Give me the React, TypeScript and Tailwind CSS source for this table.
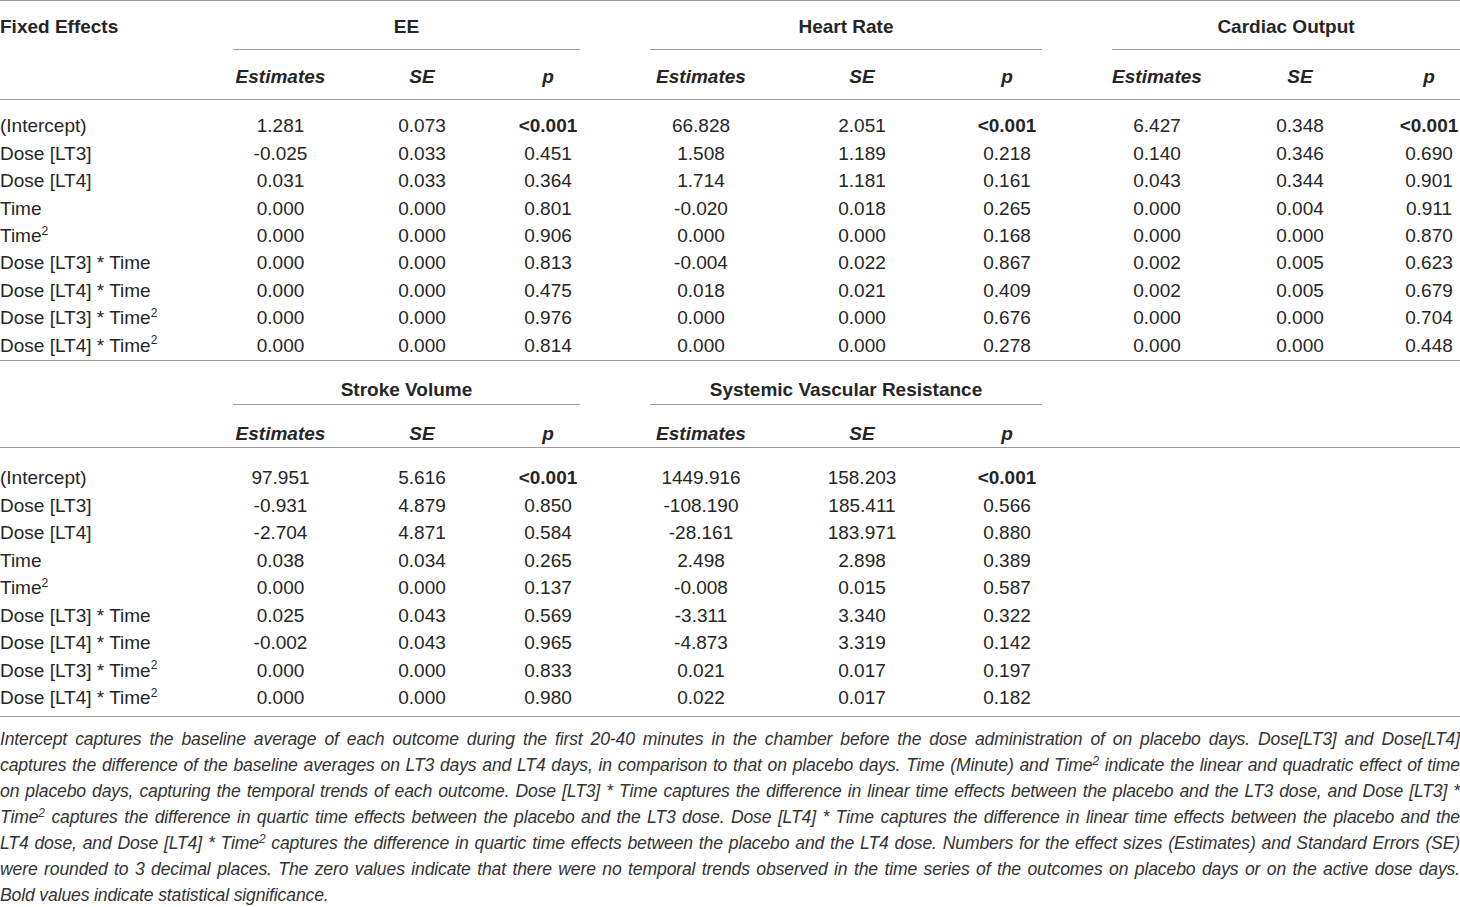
import React from "react";

type Cell = string | { v: string; bold: true };

interface Group {
  title: string;
  cols: [string, string, string];
  width: string;
}

const EE: Group = { title: "EE", cols: ["w-[95px]", "w-[188px]", "w-[64px]"], width: "w-[347px]" };
const HR: Group = { title: "Heart Rate", cols: ["w-[102px]", "w-[220px]", "w-[70px]"], width: "w-[392px]" };
const CO: Group = { title: "Cardiac Output", cols: ["w-[90px]", "w-[196px]", "w-[62px]"], width: "w-[348px]" };
const SV: Group = { ...EE, title: "Stroke Volume" };
const SVR: Group = { ...HR, title: "Systemic Vascular Resistance" };

const B = (v: string): Cell => ({ v, bold: true });

const T2 = (label: string) => (
  <>
    {label}
    <sup className="text-[12px] -top-[0.6em]">2</sup>
  </>
);

const LABELS: React.ReactNode[] = [
  "(Intercept)",
  "Dose [LT3]",
  "Dose [LT4]",
  "Time",
  T2("Time"),
  "Dose [LT3] * Time",
  "Dose [LT4] * Time",
  T2("Dose [LT3] * Time"),
  T2("Dose [LT4] * Time"),
];

const TOP_ROWS: Cell[][] = [
  ["1.281", "0.073", B("<0.001"), "66.828", "2.051", B("<0.001"), "6.427", "0.348", B("<0.001")],
  ["-0.025", "0.033", "0.451", "1.508", "1.189", "0.218", "0.140", "0.346", "0.690"],
  ["0.031", "0.033", "0.364", "1.714", "1.181", "0.161", "0.043", "0.344", "0.901"],
  ["0.000", "0.000", "0.801", "-0.020", "0.018", "0.265", "0.000", "0.004", "0.911"],
  ["0.000", "0.000", "0.906", "0.000", "0.000", "0.168", "0.000", "0.000", "0.870"],
  ["0.000", "0.000", "0.813", "-0.004", "0.022", "0.867", "0.002", "0.005", "0.623"],
  ["0.000", "0.000", "0.475", "0.018", "0.021", "0.409", "0.002", "0.005", "0.679"],
  ["0.000", "0.000", "0.976", "0.000", "0.000", "0.676", "0.000", "0.000", "0.704"],
  ["0.000", "0.000", "0.814", "0.000", "0.000", "0.278", "0.000", "0.000", "0.448"],
];

const BOTTOM_ROWS: Cell[][] = [
  ["97.951", "5.616", B("<0.001"), "1449.916", "158.203", B("<0.001")],
  ["-0.931", "4.879", "0.850", "-108.190", "185.411", "0.566"],
  ["-2.704", "4.871", "0.584", "-28.161", "183.971", "0.880"],
  ["0.038", "0.034", "0.265", "2.498", "2.898", "0.389"],
  ["0.000", "0.000", "0.137", "-0.008", "0.015", "0.587"],
  ["0.025", "0.043", "0.569", "-3.311", "3.340", "0.322"],
  ["-0.002", "0.043", "0.965", "-4.873", "3.319", "0.142"],
  ["0.000", "0.000", "0.833", "0.021", "0.017", "0.197"],
  ["0.000", "0.000", "0.980", "0.022", "0.017", "0.182"],
];

const NOTE_LINES: React.ReactNode[] = [
  "Intercept captures the baseline average of each outcome during the first 20-40 minutes in the chamber before the dose administration of on placebo days. Dose[LT3] and Dose[LT4]",
  <>
    captures the difference of the baseline averages on LT3 days and LT4 days, in comparison to that on placebo days. Time (Minute) and Time
    <sup className="text-[12px]">2</sup> indicate the linear and quadratic effect of time
  </>,
  "on placebo days, capturing the temporal trends of each outcome. Dose [LT3] * Time captures the difference in linear time effects between the placebo and the LT3 dose, and Dose [LT3] *",
  <>
    Time<sup className="text-[12px]">2</sup> captures the difference in quartic time effects between the placebo and the LT3 dose. Dose [LT4] * Time captures the difference in linear time effects between the placebo and the
  </>,
  <>
    LT4 dose, and Dose [LT4] * Time<sup className="text-[12px]">2</sup> captures the difference in quartic time effects between the placebo and the LT4 dose. Numbers for the effect sizes (Estimates) and Standard Errors (SE)
  </>,
  "were rounded to 3 decimal places. The zero values indicate that there were no temporal trends observed in the time series of the outcomes on placebo days or on the active dose days.",
];

function ValueCell({ cell, width }: { cell: Cell; width: string }) {
  const bold = typeof cell !== "string";
  return (
    <div className={`${width} shrink-0 text-center ${bold ? "font-bold" : ""}`}>
      {typeof cell === "string" ? cell : cell.v}
    </div>
  );
}

function Spacer() {
  return <div className="w-[70px] shrink-0" />;
}

// group titles sit on a rule that spans only their three columns
function GroupTitles({ groups, first, box }: { groups: Group[]; first?: string; box: string }) {
  return (
    <div className={`flex ${box}`}>
      <div className="w-[233px] shrink-0 font-bold">{first}</div>
      {groups.map((g, i) => (
        <React.Fragment key={g.title}>
          {i > 0 && <Spacer />}
          <div className={`${g.width} shrink-0 text-center font-bold border-b border-[#9d9d9d]`}>{g.title}</div>
        </React.Fragment>
      ))}
    </div>
  );
}

function SubHeader({ groups, box }: { groups: Group[]; box: string }) {
  return (
    <div className={`flex items-start ${box} border-b border-[#9d9d9d] font-bold italic`}>
      <div className="w-[233px] shrink-0" />
      {groups.map((g, i) => (
        <React.Fragment key={g.title}>
          {i > 0 && <Spacer />}
          <div className={`${g.cols[0]} shrink-0 text-center`}>Estimates</div>
          <div className={`${g.cols[1]} shrink-0 text-center`}>SE</div>
          <div className={`${g.cols[2]} shrink-0 text-center`}>p</div>
        </React.Fragment>
      ))}
    </div>
  );
}

function DataRows({ groups, rows, rowHeight }: { groups: Group[]; rows: Cell[][]; rowHeight: string }) {
  return (
    <>
      {rows.map((row, r) => (
        <div key={r} className={`flex items-center ${rowHeight}`}>
          <div className="w-[233px] shrink-0 whitespace-nowrap">{LABELS[r]}</div>
          {groups.map((g, i) => (
            <React.Fragment key={g.title}>
              {i > 0 && <Spacer />}
              <ValueCell cell={row[i * 3]} width={g.cols[0]} />
              <ValueCell cell={row[i * 3 + 1]} width={g.cols[1]} />
              <ValueCell cell={row[i * 3 + 2]} width={g.cols[2]} />
            </React.Fragment>
          ))}
        </div>
      ))}
    </>
  );
}

export default function App() {
  const top = [EE, HR, CO];
  const bottom = [SV, SVR];
  return (
    <div className="w-[1460px] h-[907px] overflow-hidden bg-white text-[#262626] text-[19px] font-['Liberation_Sans',Arial,sans-serif]">
      <div className="border-t border-[#9d9d9d]">
        <GroupTitles groups={top} first="Fixed Effects" box="[&>div]:h-[49px] [&>div]:pt-[12px]" />
        <SubHeader groups={top} box="h-[50px] pt-[13px]" />
        <div className="pt-[13px] border-b border-[#9d9d9d]">
          <DataRows groups={top} rows={TOP_ROWS} rowHeight="h-[27.4px]" />
        </div>
      </div>

      <div>
        <GroupTitles groups={bottom} box="[&>div]:h-[44px] [&>div]:pt-[15px]" />
        <SubHeader groups={bottom} box="h-[43px] pt-[15px]" />
        <div className="pt-[17px] pb-[4px] border-b border-[#9d9d9d]">
          <DataRows groups={bottom} rows={BOTTOM_ROWS} rowHeight="h-[27.5px]" />
        </div>
      </div>

      <div className="pt-[9px] italic text-[17.6px] tracking-[-0.15px] leading-[26px] text-[#333]">
        {NOTE_LINES.map((line, i) => (
          <div key={i} className="whitespace-nowrap text-justify [text-align-last:justify]">
            {line}
          </div>
        ))}
        <div className="whitespace-nowrap">Bold values indicate statistical significance.</div>
      </div>
    </div>
  );
}
